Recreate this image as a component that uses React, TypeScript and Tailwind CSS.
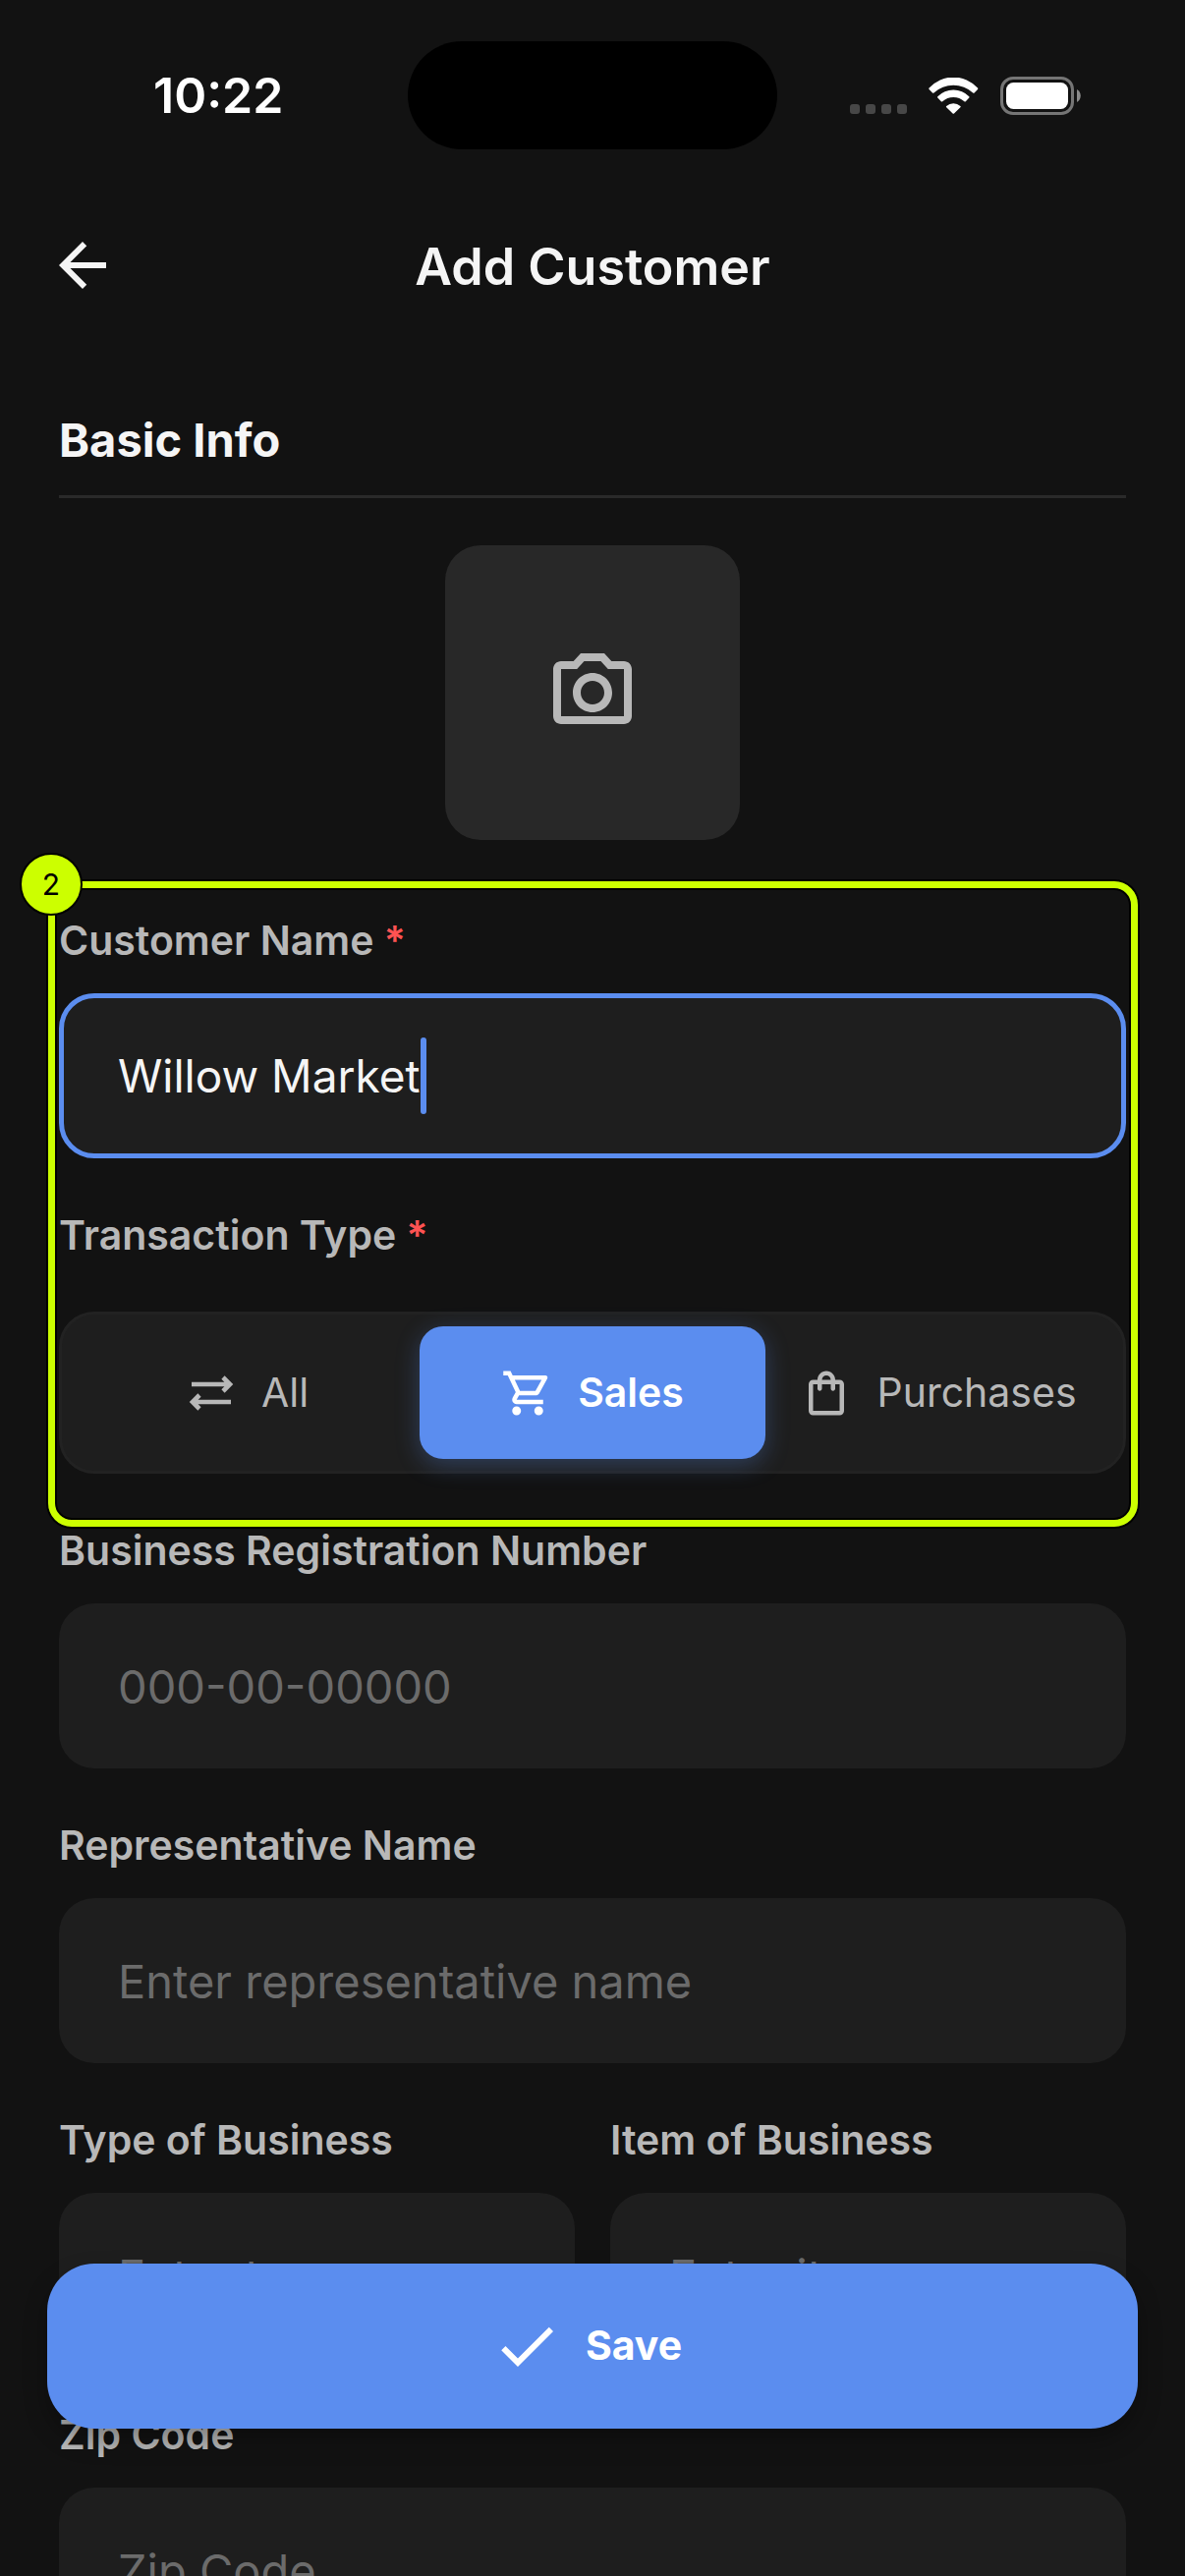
import {
  MdArrowBack,
  MdCheck,
  MdOutlineCameraAlt,
  MdOutlineShoppingBag,
  MdOutlineShoppingCart,
} from "react-icons/md";

const WifiIcon = () => (
  <svg className="h-[37px] w-[51px]" viewBox="0 0 51 37" fill="white">
    <path d="M0.6 10.500A33.300 33.300 0 0 1 50 10.500Q50.600 11.200 50 11.900L46.600 15.400Q45.900 16 45.200 15.400A29.500 29.500 0 0 0 5.400 15.400Q4.700 16 4 15.400L0.600 11.900Q0 11.200 0.600 10.500Z" />
    <path d="M9.300 19.200A22.500 22.500 0 0 1 41.300 19.200Q41.900 19.900 41.300 20.600L37.800 24.200Q37.100 24.900 36.400 24.300A16.500 16.500 0 0 0 14.200 24.300Q13.500 24.900 12.800 24.200L9.300 20.600Q8.700 19.900 9.300 19.200Z" />
    <path d="M18.200 28.900A11 11 0 0 1 32.400 28.900Q33.100 29.600 32.400 30.300L26 36.500Q25.300 37.200 24.600 36.500L18.200 30.300Q17.500 29.600 18.200 28.900Z" />
  </svg>
);

const BatteryIcon = () => (
  <svg className="h-[39px] w-[82px]" viewBox="0 0 82 39">
    <rect x="1.500" y="1.500" width="72" height="36" rx="11.500" fill="none" stroke="#757575" strokeWidth="3" />
    <rect x="6" y="6" width="63" height="27" rx="7.500" fill="white" />
    <path d="M78 13C83 15.500 83 23.500 78 26Z" fill="#8a8a8a" />
  </svg>
);

const TransferIcon = () => (
  <svg
    className="h-[54px] w-[54px]"
    viewBox="0 0 54 54"
    fill="none"
    stroke="currentColor"
    strokeWidth="4.600"
  >
    <path d="M7 18H46M39 11L46 18L39 25" />
    <path d="M47 36H8M15 29L8 36L15 43" />
  </svg>
);

const StatusBar = () => {
  return (
    <div className="grid grid-cols-3 items-center px-12 pt-[42px]">
      <span className="pl-27 text-[50px] leading-[110px] font-semibold text-white">
        10:22
      </span>
      <div className="h-[110px] w-[376px] justify-self-center rounded-full bg-black" />
      <div className="flex items-center justify-end gap-[22px] pr-[58px]">
        <div className="flex gap-1.5 pt-7">
          <span className="h-2.5 w-2.5 rounded-[3px] bg-[#474747]" />
          <span className="h-2.5 w-2.5 rounded-[3px] bg-[#474747]" />
          <span className="h-2.5 w-2.5 rounded-[3px] bg-[#474747]" />
          <span className="h-2.5 w-2.5 rounded-[3px] bg-[#474747]" />
        </div>
        <WifiIcon />
        <BatteryIcon />
      </div>
    </div>
  );
};

type FieldProps = {
  id: string;
  label: string;
  placeholder: string;
};

const Field = ({ id, label, placeholder }: FieldProps) => {
  return (
    <div className="flex min-w-0 flex-1 flex-col gap-6">
      <label
        htmlFor={id}
        className="text-[41px] leading-[60px] font-semibold text-[#b8b8b8]"
      >
        {label}
      </label>
      <input
        id={id}
        type="text"
        placeholder={placeholder}
        className="h-[168px] w-full rounded-[36px] bg-[#1e1e1e] px-15 text-[47px] text-[#f5f5f5] outline-none placeholder:text-[#6b6b6b]"
      />
    </div>
  );
};

const Required = () => <span className="text-[#ff5252]">*</span>;

// Numbered marker drawn over the section it sits in
const StepHighlight = ({ step }: { step: number }) => {
  return (
    <div className="pointer-events-none absolute -top-1.5 -right-3 -bottom-[54px] -left-[11px] rounded-3xl border-[7px] border-[#ccff00] shadow-[0_0_0_2px_#000,inset_0_0_0_2px_#000]">
      <span className="absolute -top-9 -left-9 flex h-16 w-16 items-center justify-center rounded-full border-2 border-black bg-[#ccff00] text-[30px] text-black">
        {step}
      </span>
    </div>
  );
};

export default function App() {
  return (
    <div className="relative flex h-screen flex-col overflow-hidden bg-[#121212] font-['Inter',sans-serif] text-[#f5f5f5]">
      <StatusBar />
      <header className="grid grid-cols-[72px_1fr_72px] items-start px-12 pt-[82px] pb-[51px]">
        <button type="button" aria-label="Back">
          <MdArrowBack size={72} />
        </button>
        <h1 className="pt-0.5 text-center text-[52px] leading-[72px] font-semibold">
          Add Customer
        </h1>
      </header>

      <main className="flex-1 overflow-y-auto px-15 pt-[53px] [scrollbar-width:none]">
        <h2 className="border-b-3 border-[#2a2a2a] pb-5 text-[47px] leading-[72px] font-bold">
          Basic Info
        </h2>
        <div className="flex justify-center py-12">
          <button
            type="button"
            aria-label="Add photo"
            className="flex h-[300px] w-[300px] items-center justify-center rounded-[36px] bg-[#282828] text-[#b8b8b8]"
          >
            <MdOutlineCameraAlt size={96} />
          </button>
        </div>

        <section className="relative pt-6">
          <div className="flex flex-col gap-6">
            <label
              htmlFor="customer-name"
              className="text-[41px] leading-[60px] font-semibold text-[#b8b8b8]"
            >
              Customer Name <Required />
            </label>
            <div className="flex h-[168px] items-center rounded-[36px] border-5 border-[#5b8def] bg-[#1e1e1e] px-[55px]">
              <input
                id="customer-name"
                type="text"
                defaultValue="Willow Market"
                className="field-sizing-content text-[46px] outline-none"
              />
              <span className="h-[78px] w-1.5 rounded-full bg-[#5b8def]" />
            </div>
          </div>

          <fieldset className="pt-12">
            <legend className="contents text-[41px] leading-[60px] font-semibold text-[#b8b8b8]">
              Transaction Type <Required />
            </legend>
            <div className="mt-12 grid grid-cols-3 rounded-[36px] border-3 border-[#222222] bg-[#1e1e1e] p-3 text-[41px] text-[#b8b8b8]">
              <button
                type="button"
                className="flex h-[135px] items-center justify-center gap-6"
              >
                <TransferIcon />
                All
              </button>
              <button
                type="button"
                className="flex h-[135px] items-center justify-center gap-6 rounded-3xl bg-[#5b8def] font-semibold text-white shadow-[0_6px_24px_rgba(91,141,239,0.3)]"
              >
                <MdOutlineShoppingCart size={54} />
                Sales
              </button>
              <button
                type="button"
                className="flex h-[135px] items-center justify-center gap-6"
              >
                <MdOutlineShoppingBag size={54} />
                Purchases
              </button>
            </div>
          </fieldset>
          <StepHighlight step={2} />
        </section>

        <div className="flex flex-col gap-12 pt-12">
          <Field
            id="registration-number"
            label="Business Registration Number"
            placeholder="000-00-00000"
          />
          <Field
            id="representative-name"
            label="Representative Name"
            placeholder="Enter representative name"
          />
          <div className="flex gap-9">
            <Field
              id="business-type"
              label="Type of Business"
              placeholder="Enter type"
            />
            <Field
              id="business-item"
              label="Item of Business"
              placeholder="Enter item"
            />
          </div>
          <Field id="zip-code" label="Zip Code" placeholder="Zip Code" />
        </div>
      </main>

      <button
        type="button"
        className="absolute inset-x-12 bottom-[150px] flex h-[168px] items-center justify-center gap-6 rounded-[48px] bg-[#5b8def] pr-3 text-[41px] font-bold text-white shadow-[0_12px_24px_rgba(0,0,0,0.3)]"
      >
        <MdCheck size={72} />
        Save
      </button>
    </div>
  );
}
